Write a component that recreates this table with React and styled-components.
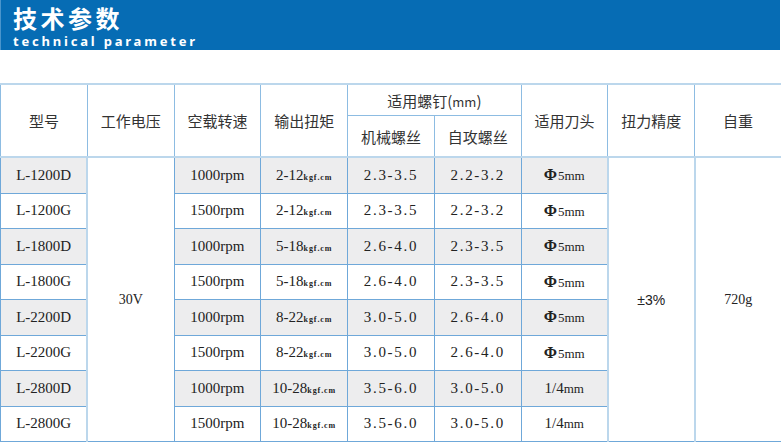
import styled, { createGlobalStyle } from "styled-components";

const GlobalStyle = createGlobalStyle`
  body {
    margin: 0;
    background: #ffffff;
    font-family: "Noto Sans CJK SC", "Noto Sans", sans-serif;
  }
`;

const Page = styled.div`
  width: 781px;
  height: 442px;
  overflow: hidden;
  display: flex;
  flex-direction: column;
  gap: 33px;
`;

const TitleBar = styled.div`
  width: 780px;
  height: 53px;
  box-sizing: border-box;
  background-color: #066cb4;
  border-left: 1px solid #4a95cc;
  padding: 5px 0 0 12px;
  color: #ffffff;
  display: flex;
  flex-direction: column;
  gap: 3px;
`;

const Title = styled.h1`
  margin: 0;
  height: 26px;
  font-family: "Noto Sans CJK SC", sans-serif;
  font-size: 24px;
  font-weight: 700;
  line-height: 26px;
  letter-spacing: 3.5px;
`;

const SubTitle = styled.div`
  height: 14px;
  font-family: "Noto Sans", "Liberation Sans", sans-serif;
  font-size: 13px;
  font-weight: 700;
  line-height: 14px;
  letter-spacing: 2.8px;
`;

const Table = styled.table`
  width: 781px;
  table-layout: fixed;
  border-collapse: collapse;
  border-top: 2px solid #bcd7ec;
`;

const Head = styled.th`
  height: ${(p) => p.$h}px;
  padding: 0;
  font-family: "Noto Sans CJK SC", sans-serif;
  font-size: 15px;
  font-weight: 400;
  color: #333333;
  text-align: center;
  border: 1px solid #8dbce2;
  border-bottom: ${(p) => (p.$last ? "2px solid #bcd7ec" : "1px solid #8dbce2")};
`;

const Cell = styled.td`
  height: 34.5px;
  padding: 0;
  text-align: center;
  font-family: "Liberation Serif", serif;
  font-size: 15px;
  color: #222222;
  letter-spacing: ${(p) => (p.$spaced ? "1.7px" : "0")};
  background: ${(p) => (p.$shade ? "#ededee" : "#ffffff")};
  border: 1px solid #6fa8d9;
`;

const MergedCell = styled.td`
  padding: 0;
  text-align: center;
  vertical-align: middle;
  font-family: ${(p) => (p.$sans ? '"Liberation Sans", sans-serif' : '"Liberation Serif", serif')};
  font-size: 14px;
  color: #222222;
  background: #ffffff;
  border: 1px solid #6fa8d9;
  border-left: 2px solid #bcd7ec;
`;

const Unit = styled.span`
  font-family: "Liberation Serif", serif;
  font-size: 8px;
  font-weight: 700;
  letter-spacing: 0.9px;
`;

const Phi = styled.span`
  font-family: "Liberation Serif", serif;
  font-weight: 700;
  font-size: 16px;
  margin-right: 1px;
`;

const Mm = styled.span`
  font-size: 13px;
`;

const rows = [
  { model: "L-1200D", speed: "1000rpm", torque: "2-12", machine: "2.3-3.5", self: "2.2-3.2", bit: "phi" },
  { model: "L-1200G", speed: "1500rpm", torque: "2-12", machine: "2.3-3.5", self: "2.2-3.2", bit: "phi" },
  { model: "L-1800D", speed: "1000rpm", torque: "5-18", machine: "2.6-4.0", self: "2.3-3.5", bit: "phi" },
  { model: "L-1800G", speed: "1500rpm", torque: "5-18", machine: "2.6-4.0", self: "2.3-3.5", bit: "phi" },
  { model: "L-2200D", speed: "1000rpm", torque: "8-22", machine: "3.0-5.0", self: "2.6-4.0", bit: "phi" },
  { model: "L-2200G", speed: "1500rpm", torque: "8-22", machine: "3.0-5.0", self: "2.6-4.0", bit: "phi" },
  { model: "L-2800D", speed: "1000rpm", torque: "10-28", machine: "3.5-6.0", self: "3.0-5.0", bit: "quarter" },
  { model: "L-2800G", speed: "1500rpm", torque: "10-28", machine: "3.5-6.0", self: "3.0-5.0", bit: "quarter" },
];

const Bit = ({ type }) =>
  type === "phi" ? (
    <>
      <Phi>Φ</Phi>
      <Mm>5mm</Mm>
    </>
  ) : (
    <>
      1/4<Mm>mm</Mm>
    </>
  );

const App = () => {
  return (
    <Page>
      <GlobalStyle />
      <TitleBar>
        <Title>技术参数</Title>
        <SubTitle>technical parameter</SubTitle>
      </TitleBar>
      <Table>
        <colgroup>
          {Array.from({ length: 9 }).map((_, i) => (
            <col key={i} style={{ width: `${781 / 9}px` }} />
          ))}
        </colgroup>
        <thead>
          <tr>
            <Head rowSpan={2} $h={30} $last>型号</Head>
            <Head rowSpan={2} $h={30} $last>工作电压</Head>
            <Head rowSpan={2} $h={30} $last>空载转速</Head>
            <Head rowSpan={2} $h={30} $last>输出扭矩</Head>
            <Head colSpan={2} $h={30}>
              适用螺钉(<Mm>mm</Mm>)
            </Head>
            <Head rowSpan={2} $h={30} $last>适用刀头</Head>
            <Head rowSpan={2} $h={30} $last>扭力精度</Head>
            <Head rowSpan={2} $h={30} $last>自重</Head>
          </tr>
          <tr>
            <Head $h={40} $last>机械螺丝</Head>
            <Head $h={40} $last>自攻螺丝</Head>
          </tr>
        </thead>
        <tbody>
          {rows.map((r, i) => {
            const shade = i % 2 === 0;
            return (
              <tr key={r.model}>
                <Cell $shade={shade}>{r.model}</Cell>
                {i === 0 && (
                  <MergedCell rowSpan={8}>30V</MergedCell>
                )}
                <Cell $shade={shade}>{r.speed}</Cell>
                <Cell $shade={shade}>
                  {r.torque}
                  <Unit>kgf.cm</Unit>
                </Cell>
                <Cell $shade={shade} $spaced>{r.machine}</Cell>
                <Cell $shade={shade} $spaced>{r.self}</Cell>
                <Cell $shade={shade}>
                  <Bit type={r.bit} />
                </Cell>
                {i === 0 && (
                  <>
                    <MergedCell rowSpan={8} $sans>±3%</MergedCell>
                    <MergedCell rowSpan={8}>720g</MergedCell>
                  </>
                )}
              </tr>
            );
          })}
        </tbody>
      </Table>
    </Page>
  );
};

export default App;
